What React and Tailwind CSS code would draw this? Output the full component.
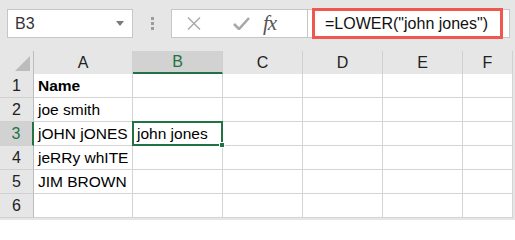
import React from "react";

const COLS = ["A", "B", "C", "D", "E", "F"];
const GRID = "grid grid-cols-[34px_99px_90px_80px_80px_80px_50px]";

const rows = [
  { n: 1, a: "Name", bold: true },
  { n: 2, a: "joe smith" },
  { n: 3, a: "jOHN jONES", b: "john jones", active: true },
  { n: 4, a: "jeRRy whITE" },
  { n: 5, a: "JIM BROWN" },
  { n: 6, a: "" },
];

function Toolbar() {
  return (
    <div className="h-[51px] flex items-start pt-[9px] pl-[7px]">
      <div className="w-[126px] h-[29px] bg-white border border-[#c6c6c6] flex items-center justify-between pl-[7px] pr-[8px]">
        <span className="text-[16px] text-[#333]">B3</span>
        <svg width="8" height="5" viewBox="0 0 8 5"><path d="M0 0h8L4 5z" fill="#7a7a7a" /></svg>
      </div>
      <div className="ml-[18px] mt-[8px] flex flex-col gap-[2px]">
        <span className="w-[3px] h-[3px] bg-[#9c9c9c]" />
        <span className="w-[3px] h-[3px] bg-[#9c9c9c]" />
        <span className="w-[3px] h-[3px] bg-[#9c9c9c]" />
      </div>
      <div className="ml-[17px] w-[339px] h-[29px] bg-white border border-[#c6c6c6] flex items-center">
        <div className="w-[136px] h-full border-r border-[#c6c6c6] flex items-center">
          <svg className="ml-[15px]" width="14" height="13" viewBox="0 0 14 13">
            <path d="M1 0.5l12 12M13 0.5l-12 12" stroke="#a8a8a8" strokeWidth="1.4" fill="none" />
          </svg>
          <svg className="ml-[32px]" width="17" height="13" viewBox="0 0 17 13">
            <path d="M1 7l5 5L16 1" stroke="#a8a8a8" strokeWidth="2.6" fill="none" />
          </svg>
          <span className="ml-[13px] text-[21px] italic text-[#555] leading-none tracking-[-1px] font-['Liberation_Serif',serif]">fx</span>
        </div>
        <div className="ml-[4px] w-[191px] h-[31px] border-[3px] border-[#f0584f] flex items-center pl-[10px] text-[16px] text-[#111] whitespace-nowrap">
          =LOWER("john jones")
        </div>
      </div>
    </div>
  );
}

export default function App() {
  return (
    <div className="w-[515px] h-[220px] bg-[#e6e6e6] overflow-hidden font-['Liberation_Sans',Arial,sans-serif]">
      <Toolbar />
      <div className={GRID}>
        <div className="h-[23px] border-r border-[#bdbdbd] flex items-end justify-end pr-[3px] pb-[3px]">
          <svg width="15" height="15" viewBox="0 0 15 15"><path d="M15 0V15H0z" fill="#bcbcbc" /></svg>
        </div>
        {COLS.map(c => (
          <div
            key={c}
            className={`h-[23px] flex items-center justify-center text-[16px] border-r border-[#d0d0d0] ${
              c === "B" ? "bg-[#d2d2d2] text-[#217346] border-b-2 border-b-[#217346]" : "text-[#222]"
            }`}
          >
            {c}
          </div>
        ))}
      </div>
      {rows.map(r => (
        <div key={r.n} className={GRID}>
          <div
            className={`h-[24px] flex items-center justify-center text-[16px] border-b border-[#d0d0d0] ${
              r.active ? "bg-[#d2d2d2] text-[#217346] border-r-2 border-r-[#217346]" : "bg-[#e6e6e6] text-[#222] border-r border-r-[#bdbdbd]"
            }`}
          >
            {r.n}
          </div>
          <div className={`h-[24px] bg-white border-r border-b border-[#d4d4d4] flex items-center pl-[4px] text-[15.5px] text-black whitespace-nowrap ${r.bold ? "font-bold" : ""}`}>
            {r.a}
          </div>
          <div className={`relative h-[24px] bg-white border-r border-b border-[#d4d4d4] flex items-center pl-[4px] text-[15.5px] text-black whitespace-nowrap ${r.active ? "z-10" : ""}`}>
            {r.b}
            {r.active && (
              <>
                <div className="absolute -left-[1px] -top-[1px] w-[91px] h-[25px] border-2 border-[#217346]" />
                <div className="absolute -right-[3px] -bottom-[3px] w-[6px] h-[6px] bg-[#217346] border border-white" />
              </>
            )}
          </div>
          {[0, 1, 2, 3].map(i => (
            <div key={i} className="h-[24px] bg-white border-r border-b border-[#d4d4d4]" />
          ))}
        </div>
      ))}
    </div>
  );
}
